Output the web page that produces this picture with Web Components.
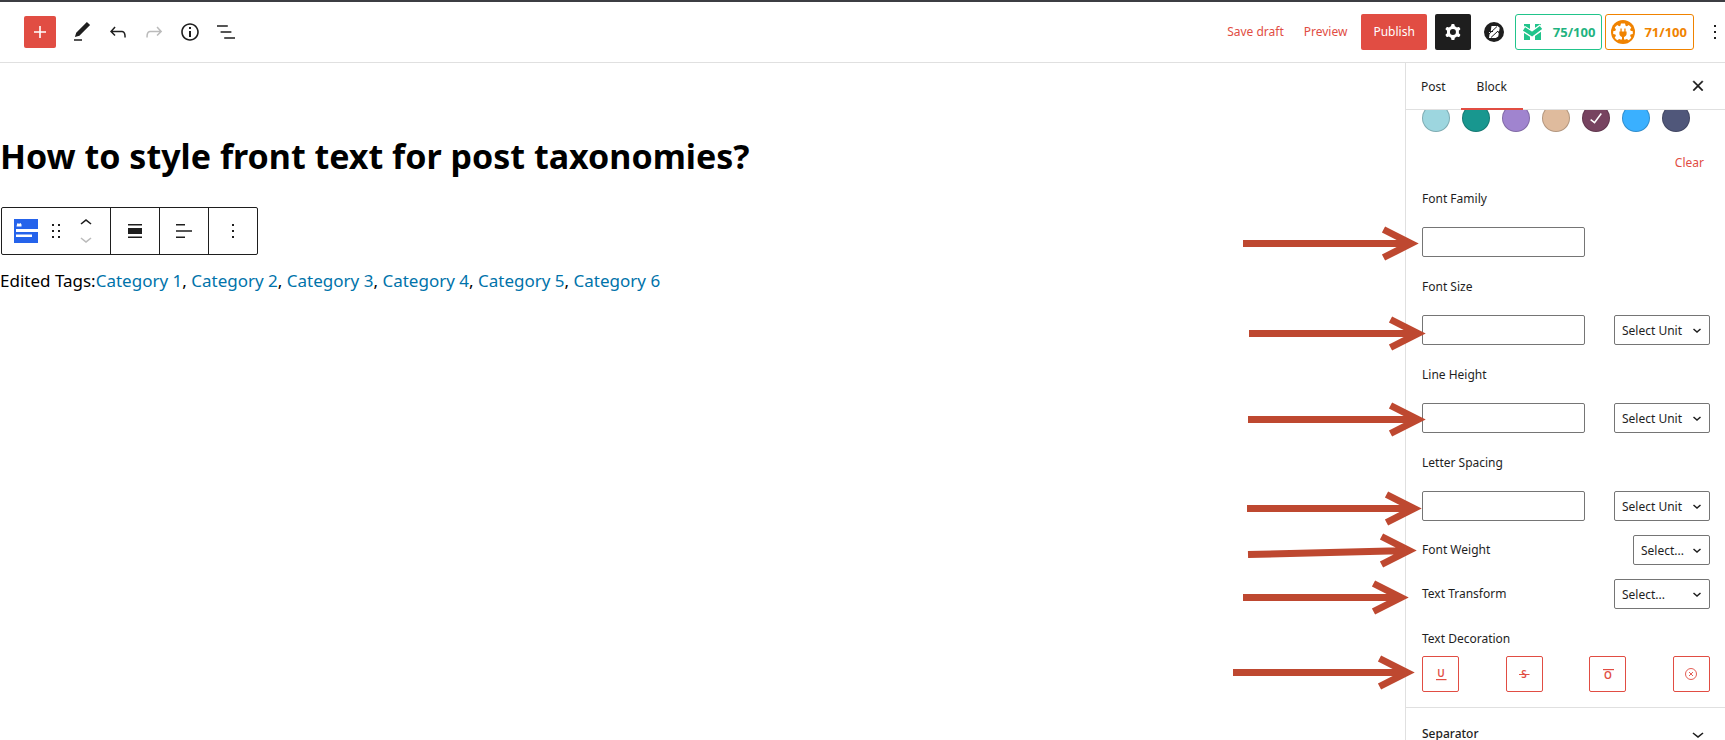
<!DOCTYPE html>
<html lang="en">
<head>
<meta charset="utf-8">
<title>Edit Post</title>
<style>
  body { margin: 0; font-family: "Noto Sans", "Open Sans", sans-serif; font-size: 12px; line-height: 20px; color: #1e1e1e; background: #fff; --accent: #e14d43; --line: #e0e0e0; }
</style>
</head>
<body>
<post-editor></post-editor>

<script>
/* Registers an element; {{name}} in its markup stands for the host's attribute of that name. */
const define = (name, html, setup) => {
  customElements.define(name, class extends HTMLElement {
    connectedCallback() {
      if (this.shadowRoot) return;
      const template = document.createElement('template');
      template.innerHTML = html.replace(/{{(\w+)}}/g, (_, key) => this.getAttribute(key) || '');
      const root = this.attachShadow({ mode: 'open' });
      root.append(template.content.cloneNode(true));
      if (setup) setup.call(this, root);
    }
  });
};

const ICONS = {
  plus: '<path d="M18 11.2h-5.2V6h-1.6v5.2H6v1.6h5.2V18h1.6v-5.2H18z"/>',
  edit: '<path d="M20.1 5.1L16.9 2 6.2 12.7l-1.3 4.4 4.5-1.3L20.1 5.1zM4 20.8h8v-1.5H4v1.5z"/>',
  undo: '<path d="M18.3 11.7c-.6-.6-1.4-.9-2.3-.9H6.7l2.9-3.3-1.1-1-4.5 5L8.5 16l1-1-2.7-2.7H16c.5 0 .9.2 1.3.5 1 1 1 3.4 1 4.5v.3h1.5v-.2c0-1.5 0-4.3-1.5-5.7z"/>',
  redo: '<path d="M15.6 6.5l-1.1 1 2.9 3.3H8c-.9 0-1.7.3-2.3.9-1.4 1.5-1.4 4.2-1.4 5.6v.2h1.5v-.3c0-1.1 0-3.5 1-4.5.3-.3.7-.5 1.3-.5h9.2L14.5 15l1.1 1.1 4.6-4.6-4.6-5z"/>',
  info: '<path d="M12 3.2c-4.8 0-8.8 3.9-8.8 8.8 0 4.8 3.9 8.8 8.8 8.8 4.8 0 8.8-3.9 8.8-8.8 0-4.8-4-8.8-8.8-8.8zm0 16c-4 0-7.2-3.3-7.2-7.2C4.8 8 8 4.8 12 4.8s7.2 3.3 7.2 7.2c0 4-3.2 7.2-7.2 7.2zM11 17h2v-6h-2v6zm0-8h2V7h-2v2z"/>',
  list: '<path d="M13.8 5.2H3v1.5h10.8V5.2zm-3.6 12v1.5H21v-1.5H10.2zm7.2-6H6.6v1.5h10.8v-1.5z"/>',
  cog: '<path fill-rule="evenodd" d="M10.289 4.836A1 1 0 0111.275 4h1.306a1 1 0 01.987.836l.244 1.466c.787.26 1.503.679 2.108 1.218l1.393-.522a1 1 0 011.216.437l.653 1.13a1 1 0 01-.23 1.273l-1.148.944a6.025 6.025 0 010 2.435l1.149.946a1 1 0 01.23 1.272l-.653 1.13a1 1 0 01-1.216.437l-1.394-.522c-.605.54-1.32.958-2.108 1.218l-.244 1.466a1 1 0 01-.987.836h-1.306a1 1 0 01-.986-.836l-.244-1.466a5.995 5.995 0 01-2.108-1.218l-1.394.522a1 1 0 01-1.217-.436l-.653-1.131a1 1 0 01.23-1.272l1.149-.946a6.026 6.026 0 010-2.435l-1.148-.944a1 1 0 01-.23-1.272l.653-1.131a1 1 0 011.217-.437l1.393.522a5.994 5.994 0 012.108-1.218l.244-1.466zM14.929 12a3 3 0 11-6 0 3 3 0 016 0z"/>',
  more: '<path d="M11 5h2v2h-2zM11 11h2v2h-2zM11 17h2v2h-2z"/>',
  close: '<path d="M13 11.8l4.1-4.1-1-1-4.1 4.1-4.1-4.1-1 1 4.1 4.1-4.1 4.2 1 1 4.1-4.1 4.1 4.1 1-1z" stroke="currentColor" stroke-width=".4"/>',
  drag: '<path d="M8 5h2v2H8zM14 5h2v2h-2zM8 11h2v2H8zM14 11h2v2h-2zM8 17h2v2H8zM14 17h2v2h-2z"/>',
  up: '<path d="M6.5 12.4L12 8l5.5 4.4-.9 1.2L12 10l-4.5 3.6z"/>',
  down: '<path d="M17.5 11.6L12 16l-5.5-4.4.9-1.2L12 14l4.5-3.6z"/>',
  align: '<path d="M5 5h14v1.5H5zM5 9h14v6H5zM5 17.5h14V19H5z"/>',
  textleft: '<path d="M4 5h9v1.5H4zM4 11.25h16v1.5H4zM4 17.5h9V19H4z"/>',
  check: '<path d="M16.7 7.1l-6.3 8.5-3.3-2.5-.9 1.2 4.5 3.4L17.9 8z"/>',
  caret: '<path d="M8.5 11l3.5 3 3.5-3" fill="none" stroke="currentColor" stroke-width="1.5"/>',
  block: '<path fill="#2563eb" d="M0 0h24v24H0z"/><path fill="#fff" d="M2.5 7.5l.8-3.3 2 .5 1.2-.7 1 1.5v2zM2 10h22v3H2zM2 15.5h16V18H2z"/>',
  brand: '<circle cx="12" cy="12" r="10"/><path fill="#fff" d="M9.5 6h6l2.2 1.800-.5 3-1.400 1.200 1 1.400-.6 3-2.400 1.600H7l.6-4.500-.8-1.500 1.900-.800z"/><path d="M7 14l8-7.500M9 17.500l7-6.500M7 11.500h4" fill="none" stroke="currentColor" stroke-width="1"/>',
  meter: '<path d="M3 4h6v16H3zM14 4h6v16h-6z"/><path d="M2 8.500l9 5.500 10-7" fill="none" stroke="#fff" stroke-width="6.500"/><path d="M9.100 4h4.800v7H9.100zM9.100 17h4.800v4H9.100z" fill="#fff"/><path d="M3 9l8 5 9-6.500" fill="none" stroke="currentColor" stroke-width="4"/>',
  plug: '<circle cx="12" cy="12" r="12"/><path fill="#fff" d="M10 3.5h4l.6 2.2 1.2.5 2-1.2 2.500 2.500-1.200 2 .5 1.200 2.200.6v2.700l-2.200.6-.5 1.200 1.200 2-2.500 2.500-2-1.200-1.200.5h-1.600v-2h-2v2H9.400l-1.200-.5-2 1.200-2.500-2.500 1.200-2-.5-1.200-2.200-.6v-2.700l2.200-.6.500-1.200-1.200-2L6.200 5l2 1.200 1.200-.5z"/><path d="M9.4 8.500h1.300v3h2.600v-3h1.300v3h1v2.300c0 1.700-1.200 2.800-2.600 3.100V20h-2v-3.100c-1.400-.3-2.600-1.400-2.600-3.100v-2.300h1z"/>',
  underline: '<text x="12" y="15" text-anchor="middle" font-size="10" font-weight="600">U</text><path d="M7 17h10.500v1.200H7z"/>',
  strike: '<text x="12" y="16" text-anchor="middle" font-size="10" font-weight="600">S</text><path d="M7 12h10.500v1H7z"/>',
  overline: '<text x="12" y="17" text-anchor="middle" font-size="10" font-weight="600">O</text><path d="M7 7h11v1.200H7z"/>',
  none: '<circle cx="12" cy="12" r="5.5" fill="none" stroke="currentColor" stroke-width=".9"/><path d="M10 10l4 4M14 10l-4 4" fill="none" stroke="currentColor" stroke-width=".9"/>'
};

define('ui-icon', `
  <style>
    :host { display: block; width: 24px; height: 24px; flex: none; }
    svg { display: block; width: 24px; height: 24px; fill: currentColor; }
  </style>
  <svg viewBox="0 0 24 24" aria-hidden="true"></svg>`,
  function (root) { root.querySelector('svg').innerHTML = ICONS[this.getAttribute('name')]; });

define('icon-button', `
  <style>
    :host { display: block; flex: none; color: #1e1e1e; }
    button { display: flex; align-items: center; justify-content: center; width: var(--w, 36px); height: var(--h, 36px); padding: 0; border: 0; border-radius: 2px; background: none; color: inherit; font-family: inherit; cursor: pointer; }
    :host([kind="primary"]) { color: #fff; --w: 32px; --h: 32px; }
    :host([kind="primary"]) button { background: var(--accent); }
    :host([kind="dark"]) { color: #fff; }
    :host([kind="dark"]) button { background: #1e1e1e; }
    :host([kind="slim"]) { --w: 20px; }
    :host([kind="outline"]) { color: var(--accent); --w: 37px; }
    :host([kind="outline"]) button { border: 1px solid var(--accent); }
    :host([dim]) { color: #bbb; }
  </style>
  <button type="button" aria-label="{{label}}"><ui-icon name="{{icon}}"></ui-icon></button>`,
  function (root) { root.querySelector('button').disabled = this.hasAttribute('dim'); });

define('text-button', `
  <style>
    :host { display: block; flex: none; }
    button { height: 36px; padding: 0 6px; border: 0; border-radius: 2px; background: none; color: var(--accent); font: inherit; cursor: pointer; }
    :host([primary]) button { padding: 0 12px; background: var(--accent); color: #fff; }
    :host([small]) button { height: 20px; }
  </style>
  <button type="button"><slot></slot></button>`);

define('score-badge', `
  <style>
    :host { display: block; flex: none; color: #1fb380; --logo: #21c48b; }
    button { display: flex; align-items: center; gap: 8px; height: 36px; padding: 0 6px 0 5px; border: 1px solid var(--logo); border-radius: 3px; background: none; color: inherit; font: inherit; font-size: 13px; font-weight: 700; cursor: pointer; }
    ui-icon { color: var(--logo); }
    :host([tone="orange"]) { color: #f08300; --logo: #f08300; }
    :host([tone="orange"]) button { gap: 9px; }
  </style>
  <button type="button"><ui-icon name="{{icon}}"></ui-icon><slot></slot></button>`);

define('editor-header', `
  <style>
    :host { display: block; border-top: 2px solid #3c3d43; border-bottom: 1px solid var(--line); }
    header { display: flex; align-items: center; justify-content: space-between; height: 60px; padding-left: 24px; }
    .tools, .actions, .badges { display: flex; align-items: center; }
    .tools icon-button:first-child { margin-right: 8px; }
    .actions { gap: 8px; }
    .badges { gap: 3px; margin: 0 3px 0 -3px; }
  </style>
  <header>
    <div class="tools">
      <icon-button kind="primary" icon="plus" label="Add block"></icon-button>
      <icon-button icon="edit" label="Tools"></icon-button>
      <icon-button icon="undo" label="Undo"></icon-button>
      <icon-button icon="redo" label="Redo" dim></icon-button>
      <icon-button icon="info" label="Details"></icon-button>
      <icon-button icon="list" label="List view"></icon-button>
    </div>
    <div class="actions">
      <text-button>Save draft</text-button>
      <text-button>Preview</text-button>
      <text-button primary>Publish</text-button>
      <icon-button kind="dark" icon="cog" label="Settings"></icon-button>
      <div class="badges">
        <icon-button icon="brand" label="Block library"></icon-button>
        <score-badge icon="meter">75/100</score-badge>
        <score-badge icon="plug" tone="orange">71/100</score-badge>
      </div>
      <icon-button kind="slim" icon="more" label="Options"></icon-button>
    </div>
  </header>`);

define('block-toolbar', `
  <style>
    :host { display: flex; width: fit-content; height: 46px; border: 1px solid #1e1e1e; border-radius: 2px; background: #fff; }
    .group { display: flex; align-items: center; justify-content: center; width: 48px; border-left: 1px solid #1e1e1e; --w: 24px; }
    .lead { gap: 6px; width: 108px; border: 0; }
    .mover { display: flex; flex-direction: column; --h: 16px; }
  </style>
  <div class="group lead">
    <icon-button icon="block" label="Post taxonomies"></icon-button>
    <icon-button icon="drag" label="Drag"></icon-button>
    <div class="mover">
      <icon-button icon="up" label="Move up"></icon-button>
      <icon-button icon="down" label="Move down" dim></icon-button>
    </div>
  </div>
  <div class="group"><icon-button icon="align" label="Align"></icon-button></div>
  <div class="group"><icon-button icon="textleft" label="Align text"></icon-button></div>
  <div class="group"><icon-button icon="more" label="Options"></icon-button></div>`);

define('editor-canvas', `
  <style>
    :host { display: block; min-width: 0; color: #000; }
    h1 { margin: 68px 0 26px; font-size: 34px; line-height: 50px; font-weight: 700; }
    block-toolbar { margin-left: 1px; }
    p { margin: 12px 0 0; font-size: 17px; line-height: 28px; }
    a { color: #0073aa; text-decoration: none; }
  </style>
  <h1>How to style front text for post taxonomies?</h1>
  <block-toolbar></block-toolbar>
  <p>Edited Tags:<a href="#1">Category 1</a>, <a href="#2">Category 2</a>, <a href="#3">Category 3</a>, <a href="#4">Category 4</a>, <a href="#5">Category 5</a>, <a href="#6">Category 6</a></p>`);

const FIELD_CSS = `
    label { display: block; }
    .select { display: grid; align-items: center; justify-items: end; }
    .select > * { grid-area: 1 / 1; }
    .select ui-icon { pointer-events: none; margin-right: 1px; }
    select { appearance: none; box-sizing: border-box; width: 96px; height: 30px; padding: 1px 24px 0 7px; border: 1px solid #757575; border-radius: 2px; background: #fff; color: inherit; font: inherit; }`;

define('size-field', `
  <style>
    :host { display: block; margin-bottom: 20px; }
    ${FIELD_CSS}
    .row { display: flex; justify-content: space-between; margin-top: 18px; }
    input { box-sizing: border-box; width: 163px; height: 30px; padding: 0 8px; border: 1px solid #757575; border-radius: 2px; background: #fff; font: inherit; }
  </style>
  <label for="value"><slot></slot></label>
  <div class="row">
    <input id="value" type="text">
    <div class="select"><select aria-label="Unit"><option>Select Unit</option><option>px</option><option>em</option></select><ui-icon name="caret"></ui-icon></div>
  </div>`,
  function (root) { if (this.hasAttribute('no-unit')) root.querySelector('.select').remove(); });

define('choice-field', `
  <style>
    :host { display: flex; align-items: center; justify-content: space-between; margin-bottom: 14px; }
    ${FIELD_CSS}
    :host([narrow]) select { width: 77px; }
  </style>
  <label for="value"><slot></slot></label>
  <div class="select"><select id="value"><option>Select...</option><option>Normal</option></select><ui-icon name="caret"></ui-icon></div>`);

define('color-swatch', `
  <style>
    :host { display: block; }
    button { display: flex; align-items: center; justify-content: center; width: 28px; height: 28px; padding: 0; border: 1px solid rgba(0, 0, 0, .2); border-radius: 50%; background: var(--swatch) border-box; color: #fff; }
  </style>
  <button type="button" aria-label="{{label}}"><slot></slot></button>`);

define('settings-sidebar', `
  <style>
    :host { display: flex; flex-direction: column; box-sizing: border-box; border-left: 1px solid var(--line); overflow: hidden; background: #fff; }
    .tabs { display: flex; align-items: center; flex: none; height: 46px; padding-right: 9px; border-bottom: 1px solid var(--line); }
    .tabs button { height: 47px; margin-bottom: -1px; padding: 2px 15px 0; border: 0; border-bottom: 2px solid transparent; background: none; color: inherit; font: inherit; }
    .tabs button[aria-selected="true"] { padding: 2px 16px 0; border-color: var(--accent); }
    .tabs icon-button { margin-left: auto; }
    .body { flex: 1; overflow: hidden; }
    .panel { padding: 0 15px 0 16px; border-bottom: 1px solid var(--line); }
    .swatches { display: flex; gap: 12px; margin: -6px 0 21px; }
    .clear { display: flex; justify-content: flex-end; margin-bottom: 16px; }
    .last { margin-bottom: 14px; }
    fieldset { margin: 20px 0 0; padding: 0 0 15px; border: 0; }
    legend { padding: 0; margin-bottom: 7px; }
    .choices { display: flex; justify-content: space-between; }
    .section { display: flex; align-items: center; justify-content: space-between; width: 100%; height: 52px; padding: 0 15px 0 16px; border: 0; background: none; color: inherit; font: inherit; font-weight: 500; }
  </style>
  <div class="tabs" role="tablist">
    <button type="button" role="tab" aria-selected="false">Post</button>
    <button type="button" role="tab" aria-selected="true">Block</button>
    <icon-button icon="close" label="Close settings"></icon-button>
  </div>
  <div class="body">
    <div class="panel">
      <div class="swatches">
        <color-swatch label="Light cyan" style="--swatch:#9dd6df"></color-swatch>
        <color-swatch label="Teal" style="--swatch:#18978f"></color-swatch>
        <color-swatch label="Purple" style="--swatch:#a084cf"></color-swatch>
        <color-swatch label="Sand" style="--swatch:#dfbb9d"></color-swatch>
        <color-swatch label="Plum" style="--swatch:#774360"><ui-icon name="check"></ui-icon></color-swatch>
        <color-swatch label="Blue" style="--swatch:#3ab0ff"></color-swatch>
        <color-swatch label="Slate" style="--swatch:#50577a"></color-swatch>
      </div>
      <div class="clear"><text-button small>Clear</text-button></div>
      <size-field no-unit>Font Family</size-field>
      <size-field>Font Size</size-field>
      <size-field>Line Height</size-field>
      <size-field class="last">Letter Spacing</size-field>
      <choice-field narrow>Font Weight</choice-field>
      <choice-field>Text Transform</choice-field>
      <fieldset>
        <legend>Text Decoration</legend>
        <div class="choices">
          <icon-button kind="outline" icon="underline" label="Underline"></icon-button>
          <icon-button kind="outline" icon="strike" label="Line through"></icon-button>
          <icon-button kind="outline" icon="overline" label="Overline"></icon-button>
          <icon-button kind="outline" icon="none" label="None"></icon-button>
        </div>
      </fieldset>
    </div>
    <button class="section" type="button" aria-expanded="false">Separator<ui-icon name="down"></ui-icon></button>
  </div>`);

/* Pointers laid over the page; x runs from the left of a 500-wide canvas pinned to the right edge. */
define('callout-arrows', `
  <style>
    :host { position: absolute; top: 0; right: 0; pointer-events: none; }
    svg { display: block; width: 500px; height: 740px; fill: none; stroke: #be4830; stroke-width: 7; }
  </style>
  <svg viewBox="1225 0 500 740" aria-hidden="true"></svg>`,
  function (root) {
    const arrows = [[1243, 243.5, 1419, 243.5], [1249, 333.5, 1426, 333.5], [1248, 419.5, 1426, 419.5], [1247, 508.5, 1422, 508.5], [1248, 554.5, 1417, 550.5], [1243, 597.5, 1409, 597.5], [1233, 672.5, 1415, 672.5]];
    root.querySelector('svg').innerHTML = arrows.map(([x1, y1, x2, y2]) =>
      `<path d="M${x1} ${y1}L${x2 - 8} ${y2}M${x2 - 35.5} ${y2 - 14}L${x2 - 8} ${y2}L${x2 - 35.5} ${y2 + 14}"/>`).join('');
  });

define('post-editor', `
  <style>
    :host { display: grid; grid-template: auto minmax(0, 1fr) / minmax(0, 1fr) 320px; height: 100vh; position: relative; overflow: hidden; }
    editor-header { grid-column: 1 / -1; }
  </style>
  <editor-header></editor-header>
  <editor-canvas></editor-canvas>
  <settings-sidebar></settings-sidebar>
  <callout-arrows></callout-arrows>`);
</script>
</body>
</html>
